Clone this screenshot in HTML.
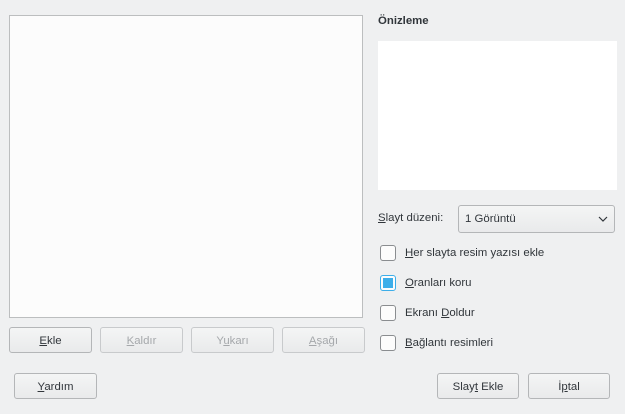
<!DOCTYPE html>
<html><head><meta charset="utf-8"><style>
body{margin:0;width:625px;height:414px;background:#eff0f1;font-family:"Liberation Sans","DejaVu Sans",sans-serif;font-size:11.4px;color:#31363b;position:relative;overflow:hidden}
.a{position:absolute}
.btn{position:absolute;height:26px;border:1px solid #b4b6b8;border-radius:3px;background:linear-gradient(#f4f5f5,#e9eaeb);box-sizing:border-box;text-align:center;line-height:27px}
.dis{color:#a5a8ab;border-color:#c8cacc}
u{text-decoration:underline}
.cb{position:absolute;left:380px;width:16px;height:16px;border:1px solid #8a8d90;border-radius:3px;background:#fcfcfc;box-sizing:border-box}
.lb{position:absolute;left:405px}
</style></head><body>
<div class="a" style="left:9px;top:15px;width:354px;height:303px;background:#fcfcfc;border:1px solid #bcbebf;box-sizing:border-box"></div>
<div class="btn" style="left:9px;top:327px;width:83px"><u>E</u>kle</div>
<div class="btn dis" style="left:100px;top:327px;width:83px"><u>K</u>aldır</div>
<div class="btn dis" style="left:191px;top:327px;width:83px">Y<u>u</u>karı</div>
<div class="btn dis" style="left:282px;top:327px;width:83px"><u>A</u>şağı</div>
<div class="btn" style="left:14px;top:373px;width:83px"><u>Y</u>ardım</div>
<div class="btn" style="left:437px;top:373px;width:82px">Slay<u>t</u> Ekle</div>
<div class="btn" style="left:528px;top:373px;width:82px">İ<u>p</u>tal</div>
<div class="a" style="left:378px;top:15px;font-weight:bold">Önizleme</div>
<div class="a" style="left:378px;top:41px;width:239px;height:149px;background:#fff"></div>
<div class="a" style="left:378px;top:212px"><u>S</u>layt düzeni:</div>
<div class="btn" style="left:458px;top:205px;width:157px;height:28px;text-align:left;padding-left:6px;line-height:27px">1 Görüntü
<svg class="a" style="right:6px;top:10px" width="10" height="7"><path d="M1 1L5 5L9 1" fill="none" stroke="#31363b" stroke-width="1.2"/></svg></div>
<div class="cb" style="top:245px"></div><div class="lb" style="top:247px"><u>H</u>er slayta resim yazısı ekle</div>
<div class="cb" style="top:275px;border-color:#3daee9"><div class="a" style="left:2px;top:2px;width:10px;height:10px;background:#3daee9"></div></div><div class="lb" style="top:277px"><u>O</u>ranları koru</div>
<div class="cb" style="top:305px"></div><div class="lb" style="top:307px">Ekranı <u>D</u>oldur</div>
<div class="cb" style="top:335px"></div><div class="lb" style="top:337px"><u>B</u>ağlantı resimleri</div>
</body></html>
